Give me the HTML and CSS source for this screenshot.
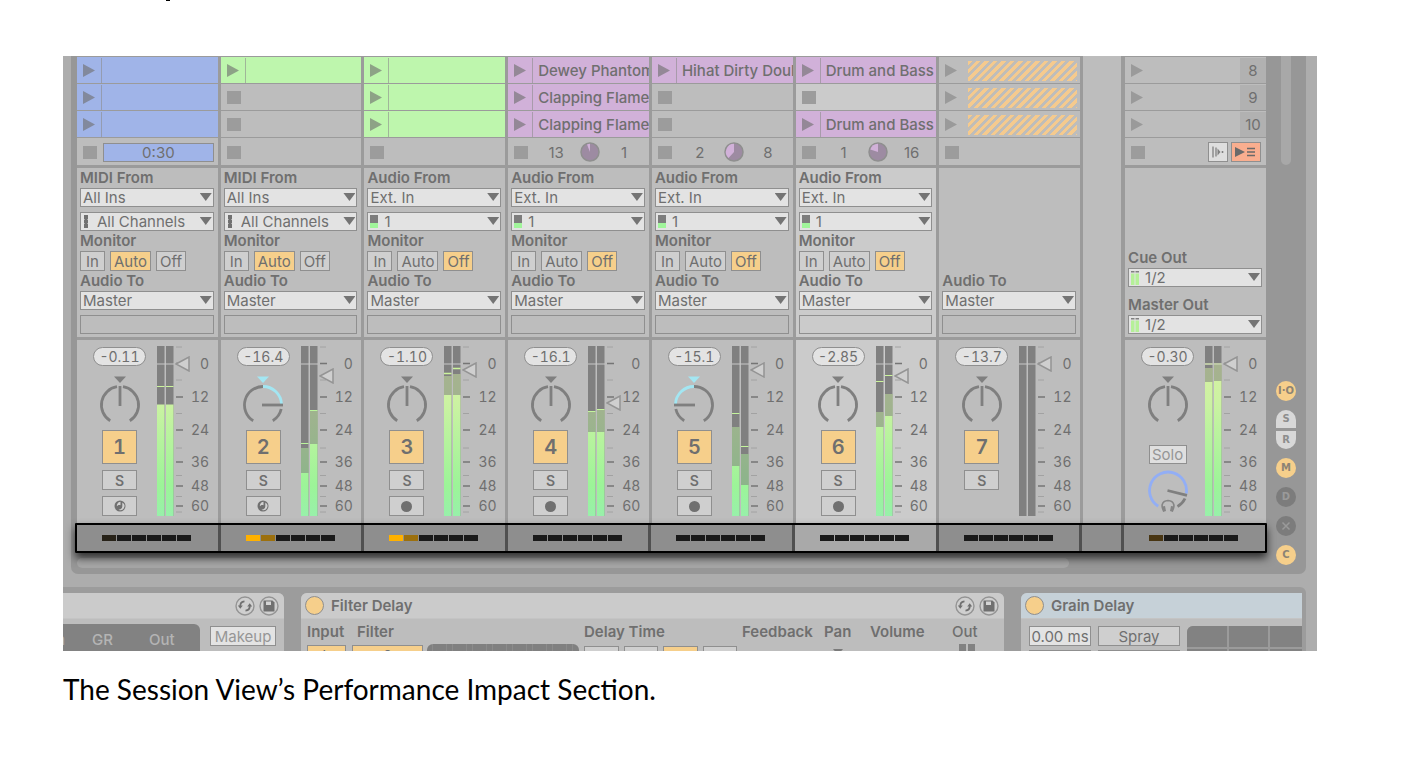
FILE: index.html
```html
<!DOCTYPE html>
<html lang="en">
<head>
<meta charset="utf-8">
<title>The Session View’s Performance Impact Section</title>
<link rel="stylesheet" href="styles.css">
</head>
<body>
<svg class="defs" width="0" height="0" aria-hidden="true">
  <defs>
    <linearGradient id="level" gradientUnits="userSpaceOnUse" x1="0" y1="18" x2="0" y2="170">
      <stop offset="0" stop-color="#d6f0a3"/><stop offset=".25" stop-color="#ccf2a2"/><stop offset=".8" stop-color="#9cf498"/><stop offset="1" stop-color="#98f0aa"/>
    </linearGradient>
    <symbol id="play" viewBox="0 0 12 13"><path d="M0 0L12 6.500L0 13z" fill="currentColor"/></symbol>
    <symbol id="pan-mid" viewBox="0 0 42 50">
      <path d="M15 2.500h12l-6 6.500z" fill="#7f7f7f"/>
      <path d="M11.200 46.700A18.500 18.500 0 0 1 18 12.700M24 12.700A18.500 18.500 0 0 1 30.800 46.700" fill="none" stroke="#7f7f7f" stroke-width="2.800"/>
      <path d="M21 12v20" stroke="#7f7f7f" stroke-width="2.800"/>
    </symbol>
    <symbol id="pan-right" viewBox="0 0 42 50">
      <path d="M15 2.500h12l-6 6.500z" fill="#a3e6f2"/>
      <path d="M11.200 46.700A18.500 18.500 0 0 1 21 12.500M39.200 35A18.500 18.500 0 0 1 30.800 46.700" fill="none" stroke="#7f7f7f" stroke-width="2.800"/>
      <path d="M21 12.500A18.500 18.500 0 0 1 39.500 30" fill="none" stroke="#a3e6f2" stroke-width="2.800"/>
      <path d="M20 31h21" stroke="#7f7f7f" stroke-width="2.800"/>
    </symbol>
    <symbol id="pan-left" viewBox="0 0 42 50">
      <path d="M15 2.500h12l-6 6.500z" fill="#a3e6f2"/>
      <path d="M2.800 35A18.500 18.500 0 0 0 11.200 46.700M21 12.500A18.500 18.500 0 0 1 30.800 46.700" fill="none" stroke="#7f7f7f" stroke-width="2.800"/>
      <path d="M2.500 30A18.500 18.500 0 0 1 21 12.500" fill="none" stroke="#a3e6f2" stroke-width="2.800"/>
      <path d="M1 31h21" stroke="#7f7f7f" stroke-width="2.800"/>
    </symbol>
    <symbol id="bars" viewBox="0 0 17 170"><path d="M0 0h7.500v170H0zM9 0h7.500v170H9z" fill="#808080"/></symbol>
    <symbol id="ticks" viewBox="0 0 34 170">
      <path d="M0 18h17" stroke="#c8c8c8"/>
      <path d="M19 1h6M19 34h6M19 67.500h6M19 102h6M19 129.500h6M19 150.500h6M19 166h6" stroke="#a2a2a2"/>
      <path d="M19 17.500h7M19 51h7M19 84h7M19 116h7M19 140h7M19 160h7" stroke="#757575" stroke-width="1.500"/>
    </symbol>
    <symbol id="fader" viewBox="0 0 15 16"><path d="M1 8L14 1v14z" fill="#cfcfcf" stroke="#949494" stroke-width="1.500"/></symbol>
    <symbol id="midi" viewBox="0 0 6 13"><path d="M1 0h4v4l-1 .5 1 .5v3l-1 .5 1 .5v4H1V9l1-.5L1 8V5l1-.5L1 4z" fill="#707070"/></symbol>
    <symbol id="mono" viewBox="0 0 8 13"><path d="M0 0h8v8H0z" fill="#7d7d7d"/><path d="M0 8h8v5H0z" fill="#a0f59a"/></symbol>
    <symbol id="stereo" viewBox="0 0 8 14"><path d="M0 0h3.500v1.500H0zM4.500 0H8v1.500H4.500z" fill="#808080"/><path d="M0 2.500h3.500V14H0zM4.500 2.500H8V14H4.500z" fill="#b5f098"/></symbol>
    <symbol id="midi-arm" viewBox="0 0 12 12"><circle cx="6" cy="6" r="5.500" fill="#707070"/><path d="M8.300 2.600A4 4 0 0 1 4.500 9.700c2 0 3.800-1.200 3.800-3.500z" fill="#d2d2d2"/><path d="M6.500 1.700v3.600C5.500 4.600 3.800 5 3 6.300 2.500 4.500 4 2 6.500 1.700z" fill="#d2d2d2"/></symbol>
    <symbol id="swap" viewBox="0 0 20 20"><circle cx="10" cy="10" r="9" fill="#cfcfcf" stroke="#949494" stroke-width="1.400"/><path d="M9.500 5.300C6.500 5.500 5 7.500 5.200 11M10.500 14.700c3-.2 4.500-2.200 4.300-5.700" fill="none" stroke="#707070" stroke-width="1.800"/><path d="M2.800 9.500h5l-2.500 3.200zM12.200 10.500h5l-2.500-3.200z" fill="#707070"/></symbol>
    <symbol id="save" viewBox="0 0 20 20"><circle cx="10" cy="10" r="9" fill="#cfcfcf" stroke="#949494" stroke-width="1.400"/><path d="M4.500 4.500h9l2 2v9h-11z" fill="#707070"/><path d="M7 5.500h5v3.500H7z" fill="#d5d5d5"/></symbol>
  </defs>
</svg>

<div class="previous-line"><i></i></div>

<figure class="shot">
  <div class="live">
    <div class="session">
      <div class="board-area">
        <div class="board">

          <section class="track">
            <div class="clips">
              <div class="slot blue"><svg class="play"><use href="#play"/></svg><span class="name"></span></div>
              <div class="slot blue"><svg class="play"><use href="#play"/></svg><span class="name"></span></div>
              <div class="slot blue"><svg class="play"><use href="#play"/></svg><span class="name"></span></div>
              <div class="slot status"><i class="stop"></i><span class="progress">0:30</span></div>
            </div>
            <div class="io">
              <label class="cap" for="from1">MIDI From</label>
              <div class="pick"><select id="from1"><option>All Ins</option></select></div>
              <div class="pick channel"><svg class="chan-midi"><use href="#midi"/></svg><select aria-label="Channel"><option>All Channels</option></select></div>
              <span class="cap">Monitor</span>
              <div class="monitor"><button>In</button><button class="on">Auto</button><button>Off</button></div>
              <label class="cap" for="to1">Audio To</label>
              <div class="pick"><select id="to1"><option>Master</option></select></div>
              <div class="empty"></div>
            </div>
            <div class="strip">
              <div class="controls"><output class="peak">-0.11</output><svg class="pan"><use href="#pan-mid"/></svg><button class="activator">1</button><button class="small">S</button><button class="small" aria-label="Arm"><svg class="arm"><use href="#midi-arm"/></svg></button></div>
              <svg class="meter" viewBox="0 0 34 170"><use href="#bars" width="17" height="170"/><path d="M0 58.500h7.500V170H0zM9 58.500h7.500V170H9z" fill="url(#level)"/><path d="M0 40.500h7.500M9 40.500h7.500" stroke="#ccf59c"/><use href="#ticks" width="34" height="170"/><use href="#fader" x="18" y="10" width="15" height="16"/></svg>
              <div class="scale"><span>0</span><span>12</span><span>24</span><span>36</span><span>48</span><span>60</span></div>
            </div>
          </section>

          <section class="track">
            <div class="clips">
              <div class="slot green"><svg class="play"><use href="#play"/></svg><span class="name"></span></div>
              <div class="slot"><i class="stop"></i></div>
              <div class="slot"><i class="stop"></i></div>
              <div class="slot status"><i class="stop"></i></div>
            </div>
            <div class="io">
              <label class="cap" for="from2">MIDI From</label>
              <div class="pick"><select id="from2"><option>All Ins</option></select></div>
              <div class="pick channel"><svg class="chan-midi"><use href="#midi"/></svg><select aria-label="Channel"><option>All Channels</option></select></div>
              <span class="cap">Monitor</span>
              <div class="monitor"><button>In</button><button class="on">Auto</button><button>Off</button></div>
              <label class="cap" for="to2">Audio To</label>
              <div class="pick"><select id="to2"><option>Master</option></select></div>
              <div class="empty"></div>
            </div>
            <div class="strip">
              <div class="controls"><output class="peak">-16.4</output><svg class="pan"><use href="#pan-right"/></svg><button class="activator">2</button><button class="small">S</button><button class="small" aria-label="Arm"><svg class="arm"><use href="#midi-arm"/></svg></button></div>
              <svg class="meter" viewBox="0 0 34 170"><use href="#bars" width="17" height="170"/><path d="M0 102h7.500v68H0zM9 65h7.500v105H9z" fill="url(#level)"/><path d="M0 102h7.500v25H0zM9 65h7.500v33H9z" fill="#808080" opacity=".55"/><path d="M0 97.500h7.500M9 64.500h7.500" stroke="#baf59c"/><use href="#ticks" width="34" height="170"/><use href="#fader" x="18" y="22" width="15" height="16"/></svg>
              <div class="scale"><span>0</span><span>12</span><span>24</span><span>36</span><span>48</span><span>60</span></div>
            </div>
          </section>

          <section class="track">
            <div class="clips">
              <div class="slot green"><svg class="play"><use href="#play"/></svg><span class="name"></span></div>
              <div class="slot green"><svg class="play"><use href="#play"/></svg><span class="name"></span></div>
              <div class="slot green"><svg class="play"><use href="#play"/></svg><span class="name"></span></div>
              <div class="slot status"><i class="stop"></i></div>
            </div>
            <div class="io">
              <label class="cap" for="from3">Audio From</label>
              <div class="pick"><select id="from3"><option>Ext. In</option></select></div>
              <div class="pick channel"><svg class="chan-mono"><use href="#mono"/></svg><select aria-label="Channel"><option>1</option></select></div>
              <span class="cap">Monitor</span>
              <div class="monitor"><button>In</button><button>Auto</button><button class="on">Off</button></div>
              <label class="cap" for="to3">Audio To</label>
              <div class="pick"><select id="to3"><option>Master</option></select></div>
              <div class="empty"></div>
            </div>
            <div class="strip">
              <div class="controls"><output class="peak">-1.10</output><svg class="pan"><use href="#pan-mid"/></svg><button class="activator">3</button><button class="small">S</button><button class="small" aria-label="Arm"><i class="dot"></i></button></div>
              <svg class="meter" viewBox="0 0 34 170"><use href="#bars" width="17" height="170"/><path d="M0 30h7.500v140H0zM9 28h7.500v142H9z" fill="url(#level)"/><path d="M0 30h7.500v19H0zM9 28h7.500v21H9z" fill="#808080" opacity=".55"/><path d="M0 27.500h7.500M9 22.500h7.500" stroke="#ccf59c" stroke-width="1.500"/><use href="#ticks" width="34" height="170"/><use href="#fader" x="18" y="16" width="15" height="16"/></svg>
              <div class="scale"><span>0</span><span>12</span><span>24</span><span>36</span><span>48</span><span>60</span></div>
            </div>
          </section>

          <section class="track">
            <div class="clips">
              <div class="slot purple"><svg class="play"><use href="#play"/></svg><span class="name">Dewey Phantom</span></div>
              <div class="slot purple"><svg class="play"><use href="#play"/></svg><span class="name">Clapping Flames</span></div>
              <div class="slot purple"><svg class="play"><use href="#play"/></svg><span class="name">Clapping Flames</span></div>
              <div class="slot status"><i class="stop"></i><div class="loop"><span>13</span><svg class="pie" viewBox="0 0 20 20"><circle cx="10" cy="10" r="9" fill="#9d8ba2" stroke="#8f8f8f" stroke-width="1.500"/><path d="M10 10V1.800A8 8 0 0 0 7 2.400z" fill="#d1b1d9"/></svg><span>1</span></div></div>
            </div>
            <div class="io">
              <label class="cap" for="from4">Audio From</label>
              <div class="pick"><select id="from4"><option>Ext. In</option></select></div>
              <div class="pick channel"><svg class="chan-mono"><use href="#mono"/></svg><select aria-label="Channel"><option>1</option></select></div>
              <span class="cap">Monitor</span>
              <div class="monitor"><button>In</button><button>Auto</button><button class="on">Off</button></div>
              <label class="cap" for="to4">Audio To</label>
              <div class="pick"><select id="to4"><option>Master</option></select></div>
              <div class="empty"></div>
            </div>
            <div class="strip">
              <div class="controls"><output class="peak">-16.1</output><svg class="pan"><use href="#pan-mid"/></svg><button class="activator">4</button><button class="small">S</button><button class="small" aria-label="Arm"><i class="dot"></i></button></div>
              <svg class="meter" viewBox="0 0 34 170"><use href="#bars" width="17" height="170"/><path d="M0 66h7.500v104H0zM9 64h7.500v106H9z" fill="url(#level)"/><path d="M0 66h7.500v20H0zM9 64h7.500v22H9z" fill="#808080" opacity=".55"/><path d="M0 65.500h7.500M9 63.500h7.500" stroke="#c4f59c"/><use href="#ticks" width="34" height="170"/><use href="#fader" x="18" y="49" width="15" height="16"/></svg>
              <div class="scale"><span>0</span><span>12</span><span>24</span><span>36</span><span>48</span><span>60</span></div>
            </div>
          </section>

          <section class="track">
            <div class="clips">
              <div class="slot purple"><svg class="play"><use href="#play"/></svg><span class="name">Hihat Dirty Double</span></div>
              <div class="slot"><i class="stop"></i></div>
              <div class="slot"><i class="stop"></i></div>
              <div class="slot status"><i class="stop"></i><div class="loop"><span>2</span><svg class="pie" viewBox="0 0 20 20"><circle cx="10" cy="10" r="9" fill="#9d8ba2" stroke="#8f8f8f" stroke-width="1.500"/><path d="M10 10V1.800A8.200 8.200 0 0 0 4.500 16z" fill="#d1b1d9"/></svg><span>8</span></div></div>
            </div>
            <div class="io">
              <label class="cap" for="from5">Audio From</label>
              <div class="pick"><select id="from5"><option>Ext. In</option></select></div>
              <div class="pick channel"><svg class="chan-mono"><use href="#mono"/></svg><select aria-label="Channel"><option>1</option></select></div>
              <span class="cap">Monitor</span>
              <div class="monitor"><button>In</button><button>Auto</button><button class="on">Off</button></div>
              <label class="cap" for="to5">Audio To</label>
              <div class="pick"><select id="to5"><option>Master</option></select></div>
              <div class="empty"></div>
            </div>
            <div class="strip">
              <div class="controls"><output class="peak">-15.1</output><svg class="pan"><use href="#pan-left"/></svg><button class="activator">5</button><button class="small">S</button><button class="small" aria-label="Arm"><i class="dot"></i></button></div>
              <svg class="meter" viewBox="0 0 34 170"><use href="#bars" width="17" height="170"/><path d="M0 81h7.500v89H0zM9 108h7.500v62H9z" fill="url(#level)"/><path d="M0 81h7.500v39H0zM9 108h7.500v31H9z" fill="#808080" opacity=".55"/><path d="M0 67.500h7.500M9 100.500h7.500" stroke="#c4f59c"/><use href="#ticks" width="34" height="170"/><use href="#fader" x="18" y="16" width="15" height="16"/></svg>
              <div class="scale"><span>0</span><span>12</span><span>24</span><span>36</span><span>48</span><span>60</span></div>
            </div>
          </section>

          <section class="track selected">
            <div class="clips">
              <div class="slot purple"><svg class="play"><use href="#play"/></svg><span class="name">Drum and Bass</span></div>
              <div class="slot"><i class="stop"></i></div>
              <div class="slot purple"><svg class="play"><use href="#play"/></svg><span class="name">Drum and Bass</span></div>
              <div class="slot status"><i class="stop"></i><div class="loop"><span>1</span><svg class="pie" viewBox="0 0 20 20"><circle cx="10" cy="10" r="9" fill="#9d8ba2" stroke="#8f8f8f" stroke-width="1.500"/><path d="M10 10V1.800A8.200 8.200 0 0 0 2.300 7.500z" fill="#d1b1d9"/></svg><span>16</span></div></div>
            </div>
            <div class="io">
              <label class="cap" for="from6">Audio From</label>
              <div class="pick"><select id="from6"><option>Ext. In</option></select></div>
              <div class="pick channel"><svg class="chan-mono"><use href="#mono"/></svg><select aria-label="Channel"><option>1</option></select></div>
              <span class="cap">Monitor</span>
              <div class="monitor"><button>In</button><button>Auto</button><button class="on">Off</button></div>
              <label class="cap" for="to6">Audio To</label>
              <div class="pick"><select id="to6"><option>Master</option></select></div>
              <div class="empty"></div>
            </div>
            <div class="strip">
              <div class="controls"><output class="peak">-2.85</output><svg class="pan"><use href="#pan-mid"/></svg><button class="activator">6</button><button class="small">S</button><button class="small" aria-label="Arm"><i class="dot"></i></button></div>
              <svg class="meter" viewBox="0 0 34 170"><use href="#bars" width="17" height="170"/><path d="M0 66h7.500v104H0zM9 48h7.500v122H9z" fill="url(#level)"/><path d="M0 66h7.500v15H0zM9 48h7.500v22H9z" fill="#808080" opacity=".55"/><path d="M0 35.500h7.500M9 29.500h7.500" stroke="#ccf59c"/><use href="#ticks" width="34" height="170"/><use href="#fader" x="18" y="22" width="15" height="16"/></svg>
              <div class="scale"><span>0</span><span>12</span><span>24</span><span>36</span><span>48</span><span>60</span></div>
            </div>
          </section>

          <section class="track">
            <div class="clips">
              <div class="slot"><svg class="play"><use href="#play"/></svg><span class="hatch"></span></div>
              <div class="slot"><svg class="play"><use href="#play"/></svg><span class="hatch"></span></div>
              <div class="slot"><svg class="play"><use href="#play"/></svg><span class="hatch"></span></div>
              <div class="slot status"><i class="stop"></i></div>
            </div>
            <div class="io">
              <label class="cap" for="to7">Audio To</label>
              <div class="pick"><select id="to7"><option>Master</option></select></div>
              <div class="empty"></div>
            </div>
            <div class="strip">
              <div class="controls"><output class="peak">-13.7</output><svg class="pan"><use href="#pan-mid"/></svg><button class="activator">7</button><button class="small">S</button></div>
              <svg class="meter" viewBox="0 0 34 170"><use href="#bars" width="17" height="170"/><use href="#ticks" width="34" height="170"/><use href="#fader" x="18" y="10" width="15" height="16"/></svg>
              <div class="scale"><span>0</span><span>12</span><span>24</span><span>36</span><span>48</span><span>60</span></div>
            </div>
          </section>

          <div class="drop-area"></div>

          <section class="track master">
            <div class="clips">
              <div class="slot"><svg class="play"><use href="#play"/></svg><span class="scene">8</span></div>
              <div class="slot"><svg class="play"><use href="#play"/></svg><span class="scene">9</span></div>
              <div class="slot"><svg class="play"><use href="#play"/></svg><span class="scene">10</span></div>
              <div class="slot status"><i class="stop"></i>
                <button class="launch" aria-label="Stop all clips"><svg viewBox="0 0 18 18"><path d="M4 3.500v11M7 4.500v9" stroke="#808080" stroke-width="1.300"/><path d="M8.500 5.500l3 3.500-3 3.500z" fill="#808080"/><path d="M13.500 8v2" stroke="#808080" stroke-width="1.600"/></svg></button>
                <button class="launch arrange" aria-label="Back to arrangement"><svg viewBox="0 0 28 18"><path d="M3 4l10 5-10 5z" fill="#6a6a6a"/><path d="M15 5.500h8M15 9h8M15 12.500h8" stroke="#6a6a6a" stroke-width="1.600"/></svg></button>
              </div>
            </div>
            <div class="io">
              <label class="cap" for="cue">Cue Out</label>
              <div class="pick channel"><svg class="chan-stereo"><use href="#stereo"/></svg><select id="cue"><option>1/2</option></select></div>
              <label class="cap spaced" for="mout">Master Out</label>
              <div class="pick channel"><svg class="chan-stereo"><use href="#stereo"/></svg><select id="mout"><option>1/2</option></select></div>
            </div>
            <div class="strip">
              <div class="controls"><output class="peak">-0.30</output><svg class="pan"><use href="#pan-mid"/></svg><button class="solo">Solo</button>
                <svg class="cue" viewBox="0 0 42 44"><path d="M11.200 36.200A18.500 18.500 0 1 1 39.300 23.500" fill="none" stroke="#92aef5" stroke-width="2.800"/><path d="M20.500 20.500L40 25.300" stroke="#7f7f7f" stroke-width="2.800"/><path d="M38 28.500a18 18 0 0 1-7.500 8" fill="none" stroke="#7f7f7f" stroke-width="2.800"/><path d="M17 41c-3-4-3-10 4-10.500 7 .5 7 6.500 4 10.500" fill="none" stroke="#858585" stroke-width="1.600"/><path d="M15 36.500l3-.5 1 5-3 1zM27 36.500l-3-.5-1 5 3 1z" fill="#858585"/></svg></div>
              <svg class="meter" viewBox="0 0 34 170"><use href="#bars" width="17" height="170"/><path d="M0 22h7.500v148H0zM9 19h7.500v151H9z" fill="url(#level)"/><path d="M0 22h7.500v14H0zM9 19h7.500v16H9z" fill="#808080" opacity=".55"/><use href="#ticks" width="34" height="170"/><path d="M0 18h7.500M9 18h7.500" stroke="#d6eca6"/><use href="#fader" x="18" y="10" width="15" height="16"/></svg>
              <div class="scale"><span>0</span><span>12</span><span>24</span><span>36</span><span>48</span><span>60</span></div>
            </div>
          </section>
        </div>

        <div class="impact">
          <div class="load"><i class="warm"></i><i></i><i></i><i></i><i></i><i></i></div>
          <div class="load"><i class="full"></i><i class="half"></i><i></i><i></i><i></i><i></i></div>
          <div class="load"><i class="full"></i><i class="half"></i><i></i><i></i><i></i><i></i></div>
          <div class="load"><i></i><i></i><i></i><i></i><i></i><i></i></div>
          <div class="load"><i></i><i></i><i></i><i></i><i></i><i></i></div>
          <div class="load lit"><i></i><i></i><i></i><i></i><i></i><i></i></div>
          <div class="load"><i></i><i></i><i></i><i></i><i></i><i></i></div>
          <div class="load"></div>
          <div class="load"><i class="low"></i><i></i><i></i><i></i><i></i><i></i></div>
        </div>
        <div class="hscroll"></div>
      </div>

      <nav class="rail">
        <div class="vscroll"></div>
        <div class="toggles">
          <button class="on">I·O</button>
          <div class="pair"><button class="top">S</button><button class="bottom">R</button></div>
          <button class="on">M</button>
          <button>D</button>
          <button aria-label="Crossfader"><svg viewBox="0 0 10 10"><path d="M1.500 1.500l7 7M8.500 1.500l-7 7" stroke="#9a9a9a" stroke-width="1.500"/></svg></button>
          <button class="on">C</button>
        </div>
      </nav>
    </div>

    <div class="devices">
      <section class="device dynamics">
        <header><span class="grow"></span><svg class="round"><use href="#swap"/></svg><svg class="round"><use href="#save"/></svg></header>
        <div class="body">
          <div class="display"><span class="cut">n</span><span>GR</span><span>Out</span></div>
          <button class="light">Makeup</button>
        </div>
      </section>

      <section class="device filter">
        <header><i class="power"></i><h2>Filter Delay</h2><span class="grow"></span><svg class="round"><use href="#swap"/></svg><svg class="round"><use href="#save"/></svg></header>
        <div class="body params">
          <div class="input"><span class="cap">Input</span><button class="on">L</button></div>
          <div class="band"><span class="cap">Filter</span><button class="on">2</button></div>
          <div class="graph"></div>
          <div class="time"><span class="cap">Delay Time</span><div class="beats"><button>1</button><button>2</button><button class="on">3</button><button>4</button></div></div>
          <div class="feedback"><span class="cap">Feedback</span></div>
          <div class="panning"><span class="cap">Pan</span><i class="notch"></i></div>
          <div class="volume"><span class="cap">Volume</span></div>
          <div class="out"><span class="cap plain">Out</span><div class="outbars"><i></i><i></i></div></div>
        </div>
      </section>

      <section class="device grain">
        <header><i class="power"></i><h2>Grain Delay</h2></header>
        <div class="body">
          <div class="field"><input aria-label="Delay time" value="0.00 ms"><div class="next"></div></div>
          <div class="spray"><button>Spray</button><div class="next"></div></div>
          <div class="pad"><i></i><i></i><i></i><i></i><i></i><i></i></div>
        </div>
      </section>
    </div>
  </div>
  <figcaption>The Session View’s Performance Impact Section.</figcaption>
</figure>
</body>
</html>
```
FILE: styles.css
```css
:root {
  --face: #bdbdbd;
  --line: #9b9b9b;
  --edge: #8f8f8f;
  --text: #6f6f6f;
  --amber: #f6cf8b;
}
* { box-sizing: border-box; }
body { margin: 0; background: #fff; color: #000; }
.defs { position: absolute; }
.previous-line { height: 56px; padding-left: 166px; }
.previous-line i { display: block; width: 4px; height: 1px; background: #000; }
.shot { margin: 0 86px 0 63px; }
.shot figcaption {
  font: 28px/40px Lato, "Liberation Sans", sans-serif;
  padding-top: 18px;
}
.live {
  height: 595px;
  overflow: hidden;
  background: #adadad;
  color: var(--text);
  font: 15px/19px Inter, "Liberation Sans", sans-serif;
}
button, select, input { font: inherit; color: inherit; margin: 0; padding: 0; border-radius: 0; }
button { border: 1px solid var(--edge); background: #cfcfcf; display: flex; align-items: center; justify-content: center; }
button.on { background: var(--amber); }
i { font-style: normal; display: block; }

/* Session panel */
.session {
  display: flex;
  margin: 0 11px 0 8px;
  background: #979797;
  border-radius: 0 0 7px 7px;
}
.board-area { flex: 1; min-width: 0; }
.board {
  display: grid;
  grid-template-columns: repeat(7, minmax(0, 51fr)) 42px minmax(0, 50fr);
  grid-template-rows: repeat(3, auto);
  margin-left: 6px;
}
.track {
  display: grid;
  grid-row: span 3;
  grid-template-columns: minmax(0, 1fr);
  grid-template-rows: subgrid;
  background: var(--face);
  border-right: 3px solid var(--line);
}
.track.selected { background: #cbcbcb; }
.track.master { border-right: 0; }
.drop-area { grid-row: span 3; background: var(--face); border-right: 4px solid var(--line); }

.clips { padding-top: 1px; background: linear-gradient(var(--line) 1px, transparent 1px); border-bottom: 3px solid var(--line); }
.slot {
  display: flex;
  align-items: center;
  height: 27px;
  padding: 1px 0 0 6px;
  border-bottom: 1px solid var(--line);
  overflow: hidden;
}
.status { border-bottom: 0; background: var(--face); }
.play { width: 12px; height: 13px; color: #9a9a9a; flex: none; }
.stop { width: 14px; height: 13px; background: #9c9c9c; flex: none; }
.blue { background: #a0b4e8; }
.green { background: #bef6ad; }
.purple { background: #d1b1d9; }
.blue .play, .green .play, .purple .play { color: #707070a0; }
.name {
  flex: 1;
  min-width: 0;
  align-self: stretch;
  margin-left: 6px;
  padding-left: 5px;
  border-left: 1px solid #8c8c8c99;
  line-height: 26px;
  font-weight: 500;
  white-space: nowrap;
  overflow: hidden;
}
.hatch {
  flex: 1;
  height: 20px;
  margin: 0 3px 0 11px;
  background: repeating-linear-gradient(135deg, #f5ca8e 0 3px, #c4bdb0 3px 4px, transparent 4px 6px);
}
.progress {
  flex: 1;
  margin: 0 4px 0 6px;
  height: 19px;
  line-height: 18px;
  border: 1px solid var(--edge);
  background: #a0b4e8;
  text-align: center;
}
.loop { display: grid; grid-template-columns: repeat(3, 34px); justify-items: center; align-items: center; margin-left: 11px; }
.pie { width: 20px; height: 20px; }
.scene { width: 26px; margin-left: auto; align-self: stretch; background: #b1b1b1; line-height: 26px; text-align: center; }
.launch { width: 20px; height: 20px; background: #dedede; margin-left: auto; flex: none; }
.launch svg { width: 18px; height: 18px; }
.launch.arrange { width: 30px; background: #f9ae8f; margin: 0 5px 0 3px; }
.launch.arrange svg { width: 28px; }

/* Routing */
.io {
  display: flex;
  flex-direction: column;
  justify-content: flex-end;
  padding: 0 4px 3px 3px;
  border-bottom: 3px solid var(--line);
}
.cap { font-weight: 600; line-height: 20px; white-space: nowrap; }
.cap.spaced { margin-top: 8px; }
.cap.plain { font-weight: 500; }
.pick { position: relative; height: 19px; }
.pick select {
  appearance: none;
  display: block;
  width: 100%;
  height: 19px;
  padding: 0 16px 0 2px;
  border: 1px solid var(--edge);
  background: #e3e3e3;
  line-height: 17px;
}
.pick::after {
  content: "";
  position: absolute;
  right: 2px;
  top: 5px;
  width: 12px;
  height: 8px;
  background: #747474;
  clip-path: polygon(0 0, 100% 0, 50% 100%);
}
.pick svg { position: absolute; left: 3px; top: 3px; }
.pick.channel select { padding-left: 16px; }
.pick + .pick.channel, .pick + .empty { margin-top: 5px; }
.chan-midi { width: 6px; height: 13px; }
.chan-mono { width: 8px; height: 13px; }
.chan-stereo { width: 8px; height: 14px; }
.monitor { display: flex; gap: 5px; height: 20px; }
.monitor button { width: 41px; }
.monitor button:first-child { width: 25px; }
.monitor button:last-child { width: 30px; }
.empty { height: 19px; border: 1px solid var(--edge); }

/* Mixer strip */
.strip { display: flex; padding: 6px 0 7px 16px; font-size: 14px; font-variant-numeric: tabular-nums; }
.controls { width: 53px; display: flex; flex-direction: column; align-items: center; gap: 6px; padding-top: 1px; }
.peak {
  width: 53px;
  height: 19px;
  line-height: 17px;
  margin-bottom: 2px;
  border: 1px solid var(--edge);
  border-radius: 10px;
  background: #e3e3e3;
  text-align: center;
}
.pan { width: 42px; height: 50px; }
.activator { width: 35px; height: 34px; background: var(--amber); font-size: 20px; font-weight: 600; }
.small { width: 35px; height: 20px; font-weight: 600; }
.arm { width: 12px; height: 12px; }
.dot { width: 11px; height: 11px; border-radius: 50%; background: #707070; }
.solo { width: 38px; height: 19px; margin-top: 15px; background: #dfdfdf; color: #969696; font-size: 15px; }
.cue { width: 42px; height: 44px; }
.meter { width: 34px; height: 170px; margin-left: 11px; flex: none; }
.scale {
  display: grid;
  grid-template-rows: 34px 32px 34px 30px 18px 22px;
  align-items: center;
  justify-items: end;
  width: 17px;
}

/* Performance impact row */
.impact {
  position: relative;
  display: grid;
  grid-template-columns: repeat(7, minmax(0, 51fr)) 42px minmax(0, 50fr);
  height: 30px;
  margin: 0 -1px 0 4px;
  border: 2px solid #000;
  border-radius: 1px;
  box-shadow: 0 5px 8px #000000b0;
}
.load {
  display: flex;
  gap: 1px;
  align-items: center;
  padding-left: 25px;
  background: #8e8e8e;
  border-right: 3px solid #505050;
}
.load:last-child { border-right: 0; }
.load.lit { background: #a9a9a9; }
.load i { width: 14px; height: 6px; background: #1a1a1a; }
.load .full { background: #ffb100; }
.load .half { background: #9c700e; }
.load .warm { background: #272218; }
.load .low { background: #483512; }
.hscroll { width: 83%; height: 10px; margin: 5px 0 6px 6px; border-radius: 5px; background: #a6a6a6; }

/* View toggles */
.rail { width: 40px; display: flex; flex-direction: column; align-items: center; }
.vscroll { width: 10px; height: 109px; border-radius: 0 0 5px 5px; background: #a8a8a8; }
.toggles { display: flex; flex-direction: column; gap: 9px; margin-top: 216px; font: 700 10px/12px "DejaVu Sans", sans-serif; }
.toggles button { width: 20px; height: 20px; border: 0; border-radius: 50%; background: #7c7c7c; color: #9a9a9a; }
.toggles button.on { background: var(--amber); color: #8c8475; }
.toggles svg { width: 10px; height: 10px; }
.pair { display: flex; flex-direction: column; gap: 3px; }
.toggles .pair button { height: 18px; background: #d8d8d8; color: #8d8d8d; }
.toggles .pair .top { border-radius: 10px 10px 0 0; }
.toggles .pair .bottom { border-radius: 0 0 10px 10px; }

/* Device chain */
.devices {
  display: flex;
  gap: 17px;
  margin: 13px 11px 0 0;
  padding: 6px 4px 0 0;
  background: #9c9c9c;
  border-radius: 0 6px 0 0;
}
.device { background: var(--face); border-radius: 6px 6px 0 0; overflow: hidden; height: 70px; }
.dynamics { flex: 221 1 0; }
.filter { flex: 703 1 0; }
.grain { flex: 281 1 0; border-radius: 6px 0 0 0; }
.device.dynamics { border-radius: 0 6px 0 0; }
.device header { display: flex; align-items: center; gap: 4px; height: 26px; padding: 0 5px 0 4px; background: #cbcbcb; border-bottom: 1px solid #c4c4c4; }
.grain header { background: #c6d1d8; }
.device h2 { margin: 0 0 0 3px; font-size: 15px; font-weight: 600; line-height: 20px; }
.grow { flex: 1; }
.round { width: 20px; height: 20px; }
.power { width: 19px; height: 19px; border: 1px solid #8e8e8e; border-radius: 50%; background: var(--amber); }
.body { display: flex; }
.display { display: flex; width: 137px; height: 50px; margin: 5px 10px 0 0; padding-top: 6px; border-radius: 0 6px 0 0; background: #828282; color: #b4b4b4; font-weight: 500; }
.display span:nth-child(2) { margin-left: 27px; }
.display span:nth-child(3) { margin-left: 36px; }
.display .cut { width: 2px; direction: rtl; overflow: hidden; }
.light { width: 66px; height: 20px; margin-top: 7px; background: #e3e3e3; color: #969696; }
.params { padding: 3px 0 0 6px; }
.params > div { display: flex; flex-direction: column; flex: none; }
.params button { height: 20px; margin-top: 3px; }
.params .input { width: 39px; margin-right: 6px; }
.params .band { width: 71px; margin-right: 4px; }
.params .band .cap { padding-left: 5px; }
.params .graph { width: 152px; height: 40px; margin: 22px 5px 0 0; border-radius: 6px 6px 0 0; background: repeating-linear-gradient(90deg, #808080 0 5px, #8b8b8b 5px 6px, #808080 6px 19px, #8b8b8b 19px 20px); }
.params .time { width: 153px; margin-right: 5px; }
.beats { display: grid; grid-template-columns: repeat(4, 1fr); gap: 5px; padding-top: 1px; }
.params .feedback { width: 82px; }
.params .panning { width: 46px; }
.params .volume { width: 82px; }
.notch { width: 10px; height: 6px; margin: 7px 0 0 9px; background: #7a7a7a; clip-path: polygon(0 0, 100% 0, 50% 100%); }
.outbars { display: flex; gap: 2px; margin: 2px 0 0 7px; }
.outbars i { width: 7px; height: 20px; background: #828282; }
.grain .body { gap: 7px; padding: 7px 0 0 8px; }
.field, .spray { display: flex; flex-direction: column; gap: 4px; }
.field input { width: 62px; height: 20px; border: 1px solid var(--edge); background: #e3e3e3; text-align: center; }
.spray button { width: 82px; height: 20px; }
.next { height: 20px; border: 1px solid var(--edge); background: #cfcfcf; }
.pad { flex: 1; display: grid; grid-template-columns: 40px 39px 1fr; grid-template-rows: 21px 21px; gap: 2px; background: var(--line); border-radius: 6px 0 0 0; overflow: hidden; }
.pad i { background: #828282; }
```
